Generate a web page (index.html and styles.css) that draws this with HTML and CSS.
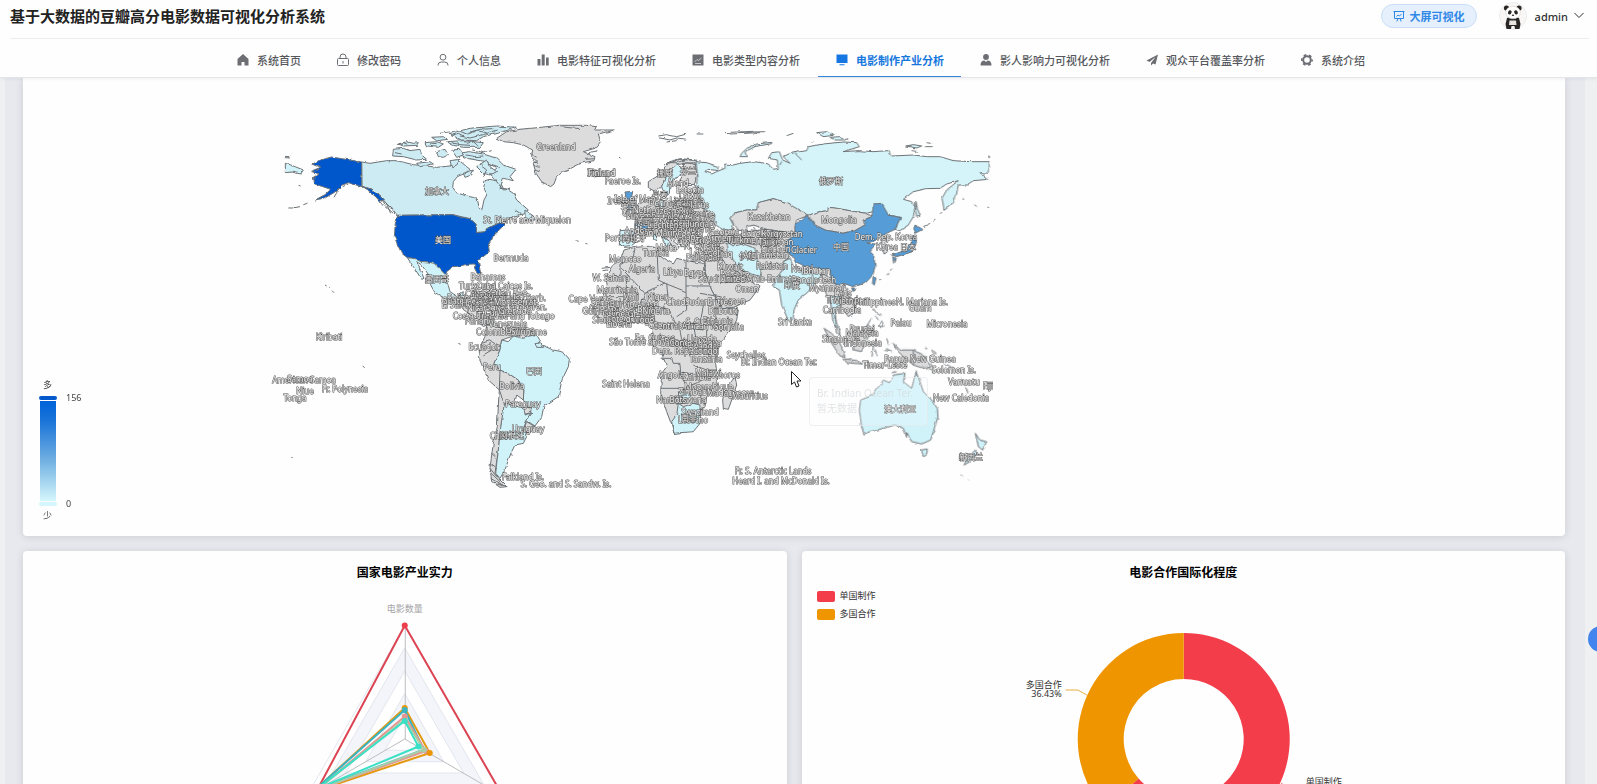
FILE: index.html
```html
<!DOCTYPE html>
<html lang="zh-CN">
<head>
<meta charset="utf-8">
<title>基于大数据的豆瓣高分电影数据可视化分析系统</title>
<link rel="stylesheet" href="styles.css">
</head>
<body>
<header class="header">
  <div class="topbar">
    <h1 class="brand">基于大数据的豆瓣高分电影数据可视化分析系统</h1>
    <div class="tools">
      <button class="screen-btn" type="button">
        <svg class="icon-sm" viewBox="0 0 12 12" fill="none" stroke="currentColor"><path d="M0.5 1.5h11M1.5 1.5v7h9v-7M3.8 11.5l1.2-3M8.2 11.5L7 8.500M3.500 6.500l1.500-1.500 1.500 1 2-2"/></svg>
        <span>大屏可视化</span>
      </button>
      <button class="user" type="button">
        <svg class="avatar" viewBox="0 0 28 28">
          <circle cx="14" cy="14" r="13.500" fill="#f8f7f5" stroke="#ececec"/>
          <g fill="#292524"><circle cx="7.500" cy="6" r="2.600"/><circle cx="20" cy="6" r="2.600"/><path d="M8 16q6-3 12 0l1.500 6-1 5h-4.500l-.5-3h-3l-.5 3H7.500L6.500 22z"/></g>
          <ellipse cx="14" cy="10.500" rx="7.300" ry="6.300" fill="#fff" stroke="#cfcac5" stroke-width=".5"/>
          <path d="M10.500 18.500h6.500l.5 4.500h-7.500z" fill="#e9e5e1"/>
          <g fill="#292524"><ellipse cx="10.800" cy="10.300" rx="1.700" ry="2.200" transform="rotate(30 10.800 10.300)"/><ellipse cx="17" cy="10.300" rx="1.700" ry="2.200" transform="rotate(-30 17 10.300)"/><ellipse cx="14" cy="13.200" rx="1.200" ry=".8"/></g>
        </svg>
        <span>admin</span>
        <svg class="icon-sm" viewBox="0 0 12 12" fill="none" stroke="currentColor"><path d="M1.500 3l4.500 4.500L10.500 3"/></svg>
      </button>
    </div>
  </div>
  <nav class="nav">
    <a class="nav-item" href="#"><svg class="icon" viewBox="0 0 16 16"><path fill="currentColor" d="M8 2L2.500 7v6.500H6.500V10h3v3.500h4V7z"/></svg>系统首页</a>
    <a class="nav-item" href="#"><svg class="icon" viewBox="0 0 16 16" fill="none" stroke="currentColor"><rect x="2.500" y="6.500" width="11" height="7" rx="1"/><path d="M5 6.500V5a3 3 0 0 1 6 0v1.500M8 9v2.500"/></svg>修改密码</a>
    <a class="nav-item" href="#"><svg class="icon" viewBox="0 0 16 16" fill="none" stroke="currentColor"><circle cx="8" cy="5.200" r="2.900"/><path d="M3 13.500V13a3.500 3 0 0 1 3.500-3h3A3.500 3 0 0 1 13 13v.5"/></svg>个人信息</a>
    <a class="nav-item" href="#"><svg class="icon" viewBox="0 0 16 16" fill="currentColor"><path d="M2.500 7h3v6.500h-3zM6.700 2.500h3v11h-3zM11 5.500h2.700v8H11z"/></svg>电影特征可视化分析</a>
    <a class="nav-item" href="#"><svg class="icon" viewBox="0 0 16 16"><path fill="currentColor" d="M2.500 2.500h11v11h-11z"/><path d="M4.500 10l2.500-2.500 1.500 1L11.500 6M5 11.500h6" fill="none" stroke="#ddd" stroke-width=".8"/></svg>电影类型内容分析</a>
    <a class="nav-item active" href="#" aria-current="page"><svg class="icon" viewBox="0 0 16 16"><path fill="currentColor" d="M2.500 2.500h11v8.500h-11zM5.500 12.300h5v1h-5z"/></svg>电影制作产业分析</a>
    <a class="nav-item" href="#"><svg class="icon" viewBox="0 0 16 16" fill="currentColor"><circle cx="8" cy="5" r="2.900"/><path d="M2.500 13.500q0-5 4-5L8 10l1.500-1.500q4 0 4 5z"/></svg>影人影响力可视化分析</a>
    <a class="nav-item" href="#"><svg class="icon" viewBox="0 0 16 16" fill="currentColor"><path d="M14 2.500L2.500 8.500l3 1.500 6-5-4.500 6v2.500l2-2 2.500 1z"/></svg>观众平台覆盖率分析</a>
    <a class="nav-item" href="#"><svg class="icon" viewBox="0 0 16 16" fill="none" stroke="currentColor"><circle cx="8" cy="8" r="3.800" stroke-width="2"/><circle cx="8" cy="8" r="5.200" stroke-width="1.600" stroke-dasharray="2.700 2.745" stroke-dashoffset="1.300"/></svg>系统介绍</a>
  </nav>
</header>

<main class="page">
  <div class="content">
  <section class="card map-card">
    <svg class="map" viewBox="23 78 1542 458" role="img" aria-label="世界电影产量地图">
      <defs>
        <linearGradient id="scale" x1="0" y1="0" x2="0" y2="1"><stop offset="0" stop-color="#0062d9"/><stop offset=".2" stop-color="#1b74d9"/><stop offset=".6" stop-color="#72b1e2"/><stop offset="1" stop-color="#d5f6fc"/></linearGradient>
        <filter id="coast" x="-5%" y="-5%" width="110%" height="110%"><feTurbulence type="fractalNoise" baseFrequency=".16" numOctaves="2" seed="4"/><feDisplacementMap in="SourceGraphic" scale="3" xChannelSelector="R" yChannelSelector="G"/></filter>
      </defs>

      <g class="land" filter="url(#coast)">
        <g transform="translate(270 110) scale(.33333)">
          <path class="ca" d="M275 156L300 160 350 152 380 152 430 164 470 168 500 172 540 168 555 150 572 155 590 170 600 178 585 190 562 200 550 215 548 232 560 248 590 258 618 264 624 290 636 298 642 270 650 255 640 238 645 212 660 208 690 215 700 235 715 240 730 250 740 270 758 285 775 300 760 312 730 318 705 338 690 338 668 348 640 366 620 368 618 342 600 326 548 314 383 316 360 292 340 270 325 252 300 236 276 230Z"/>
          <path class="ca" d="M565 130L600 125 640 132 680 145 700 165 738 178 720 200 730 212 700 205 690 235 720 238 700 240 680 215 660 190 680 175 650 155 620 150 590 145Z"/>
          <path class="ca" d="M370 118L400 115 420 122 450 118 455 135 470 148 440 150 400 140 368 138ZM385 102L410 95 430 100 445 98 440 106 400 108ZM465 98L500 95 520 102 505 112 470 108ZM500 125L525 118 535 135 520 142 505 140ZM545 120L570 118 580 135 560 142ZM485 82L520 80 530 88 500 92ZM540 70L560 65 600 55 680 48 740 52 700 65 640 80 620 92 570 90ZM530 95L580 92 640 98 630 112 580 112 550 106ZM620 170L650 150 660 170 680 185 660 195 640 190ZM765 300L790 318 795 330 765 332ZM440 160L480 155 490 162 450 170ZM540 152L570 148 560 165 545 170ZM580 190L610 180 605 195 585 202Z"/>
          <path class="none" d="M560 60L590 72 620 62 650 68M570 78L600 84 640 74 680 60M590 100L610 95 625 108M610 120L640 128 665 122M380 105L400 98 415 104M510 70L540 66M630 165L650 180 640 200M340 272L370 300 380 318M350 282L362 310M310 250L335 275M322 246L346 285M735 300L750 310 740 325M545 76L565 70 585 80M600 66L630 58 670 56M545 98L570 104 600 106M590 135L615 140 640 138M655 160L690 172M480 102L500 100M375 128L395 132M346 288L372 312M316 258L340 288"/>
          <path class="us" d="M275 156L240 150 185 141 150 150 128 162 152 172 122 184 148 192 130 202 134 222 158 230 182 238 165 254 135 270 165 264 195 246 215 226 235 218 276 230 300 236 325 252 340 270 330 272 300 245 275 230Z"/>
          <path class="us" d="M383 316L548 314 575 322 600 326 618 342 620 368 640 366 668 348 690 338 704 342 690 358 672 372 665 390 655 405 658 425 640 440 625 452 628 470 632 490 624 495 614 475 612 462 590 463 570 468 550 470 530 485 527 495 510 478 492 460 475 456 450 454 438 447 412 443 395 430 383 405 373 380 376 340Z"/>
          <path class="lo" d="M46 160L60 164 100 180 92 192 66 186 46 188ZM46 139L60 140 60 144 46 143Z"/>
          <path class="lo" d="M412 443L438 447 450 454 475 456 492 460 510 478 527 495 532 515 540 545 560 558 580 545 578 558 555 570 530 568 495 548 482 525 480 500 455 465 440 455 462 505 455 508 430 470Z"/>
          <path class="no" d="M540 568L600 580 640 620 660 640 640 650 610 620 575 595ZM610 545L650 548 690 562 680 568 640 558ZM700 565L740 568 735 580 705 578Z"/>
          <path class="none" d="M55 294L70 294M74 293L90 290M100 284L112 280M86 226L92 228M130 202L138 205M165 525L170 528M178 532L182 536M186 542L192 548M218 230L235 222M205 240L192 262"/>
        </g>

        <g transform="translate(270 300) scale(.33333)">
          <path class="no" d="M650 75L700 85 790 95 798 104 760 115 730 108 695 120 690 150 672 190 690 210 715 220 745 240 762 270 760 300 740 285 735 305 703 312 700 340 690 400 685 450 675 520 690 540 710 560 690 562 665 545 660 500 670 430 682 380 686 300 688 270 655 240 640 205 625 170 635 130 645 110Z"/>
          <path class="none" d="M635 130L660 122 690 140M640 165L665 150 690 150M690 210L688 270 703 312M655 45L650 75M720 85L722 105M662 490L675 500M658 515L690 545M662 535L700 558M670 550L712 560M745 80L750 110M664 460L676 470M660 505L680 530"/>
          <path class="lo" d="M695 120L715 125 730 108 760 115 790 105 798 100 808 118 815 135 850 150 880 156 898 178 895 200 876 240 865 290 822 318 815 350 795 378 770 362 785 340 760 300 762 270 745 240 715 220 690 210 672 190 690 150ZM795 130L812 130 818 142 800 142Z"/>
          <path class="lo" d="M703 312L730 315 770 330 765 345 785 340 770 362 760 385 770 410 760 430 735 435 725 455 715 480 705 510 690 535 677 520 685 450 692 380Z"/>
          <path class="no" d="M760 320L785 325 780 340 765 342ZM770 365L795 380 775 400 760 392Z"/>
          <path class="none" d="M565 130L572 133M278 198L284 203M64 471L68 473M720 462L728 466M705 530L730 525"/>
        </g>

        <g transform="translate(520 110) scale(.33333)">
          <path class="no" d="M-70 85L-40 65 0 58 60 52 120 46 200 46 228 50 225 60 283 60 235 72 242 95 225 115 190 125 225 140 222 152 180 160 150 175 122 187 110 200 102 222 92 230 65 215 48 190 40 160 52 155 35 140 38 120 10 105 -20 98 -50 95Z"/>
          <path class="none" d="M30 130L50 142M36 150L54 160M40 165L56 172M45 180L60 186M120 50L180 56M200 130L232 122M195 148L225 146M415 78L440 74 470 80 500 72M420 84L450 90 470 84 500 88M440 96L470 92M530 72L550 72M615 68L650 66 700 64M630 72L720 68M205 182L230 180 245 195 220 198M300 142L304 144M170 392L176 394M196 400L202 402M245 475L270 472M248 482L262 480"/>
          <path class="no" d="M330 290L370 275 400 260 440 275 560 270 560 310 585 320 580 345 550 352 520 360 500 410 485 410 470 380 450 385 480 410 470 420 430 380 400 360 380 375 345 360 345 330 315 310Z"/>
          <path class="no" d="M385 235L385 215 410 200 430 180 445 160 480 148 530 152 530 165 500 158 470 165 450 180 435 205 425 230 410 245ZM490 160L525 158 530 190 525 220 490 222 480 210 492 190Z"/>
          <path class="lo" d="M425 230L435 205 450 178 470 165 490 175 488 192 470 200 450 225 448 250 436 262Z"/>
          <path class="none" d="M432 165L450 155 480 146 530 150M440 158L470 158 500 148M485 225L560 230M490 245L555 250M470 290L560 295M430 300L580 320M440 315L560 340M380 330L470 350M400 345L500 360M520 270L525 350M480 270L485 350"/>
          <path class="mid" d="M315 246L338 244 335 262 345 280 357 290 335 300 320 298 330 280 318 262ZM345 340L365 338 390 352 380 365 345 360Z"/>
          <path class="lo" d="M300 362L325 360 350 372 345 385 350 395 330 410 312 412 298 405ZM405 275L435 275 435 290 405 290ZM465 282L490 282 490 298 465 298ZM425 380L448 395 455 405 440 410 430 395ZM402 375L410 378 408 392 400 388Z"/>
          <path class="no" d="M312 420L345 412 400 408 412 412 410 432 430 445 460 462 470 445 500 452 550 460 552 480 575 540 600 590 655 600 650 630 640 650 600 700 585 730 590 790 588 830 560 860 555 890 540 905 540 940 510 960 462 970 455 945 440 905 422 850 425 790 440 770 425 730 405 710 395 685 400 660 385 640 350 635 310 645 270 645 235 620 215 600 240 575 262 530 258 500 275 470 305 440Z"/>
          <path class="no" d="M520 385L600 375 640 385 650 430 640 480 690 510 720 530 690 570 640 592 605 592 575 540 555 485 556 430 525 410Z"/>
          <path class="none" d="M412 440L415 510 435 520 498 545 498 455M345 415L340 440 300 465 300 470 375 550 435 518M258 500L300 500 300 470M320 500L318 560 260 560M440 520L445 570 430 590M498 528L575 528M375 550L360 590 330 600M498 545L500 600 470 620M300 580L350 590 400 585 450 600M550 590L540 640 480 640M400 585L405 640M330 600L330 640M360 600L360 640M450 600L470 650 550 660M550 430L555 480M580 400L570 430M600 430L625 480M600 520L690 510M540 550L600 560M425 745L455 745 460 760 480 760 482 790 520 790M422 835L490 835 495 870M520 765L560 780 590 780M480 660L490 720 530 720M560 660L560 700 590 715M520 640L530 700M480 790L500 830 540 815 560 790M540 840L545 880"/>
          <path class="lo" d="M470 915L475 880 490 890 520 880 540 885 540 940 520 965 462 970 455 935ZM475 845L510 850 505 870 480 880Z"/>
          <path class="no" d="M645 800L650 825 635 870 625 898 610 895 608 870 615 835 630 820Z"/>
        </g>

        <g transform="translate(740 110) scale(.33333)">
          <path class="ru" d="M-132 155L-100 158 -65 170 -68 182 -95 178 -105 185 -85 192 -70 185 -45 175 -45 162 -20 165 0 160 40 155 65 158 85 162 100 178 115 175 112 150 85 145 95 128 118 125 128 150 150 160 130 140 150 130 200 122 205 110 250 102 310 96 350 98 358 110 310 125 355 122 400 125 445 122 455 138 520 135 560 140 600 140 640 152 690 155 748 155 748 190 720 188 745 208 700 212 680 225 655 225 648 260 630 285 612 298 606 265 620 240 655 212 620 222 600 235 560 236 520 245 490 268 515 275 525 290 520 320 505 345 480 362 465 358 482 322 445 315 425 285 400 282 398 305 380 310 345 305 290 295 265 292 262 302 235 306 205 316 185 305 155 290 140 278 100 266 55 278 50 300 20 300 -20 310 -30 325 -20 345 -25 360 -50 360 -80 340 -75 315 -110 295 -115 265 -130 240 -128 190Z"/>
          <path class="ru" d="M95 97L50 102 20 115 5 130 0 140 20 140 15 125 45 110 95 101ZM527 275L534 300 541 318 530 322 527 300ZM230 68L260 65 280 76 250 80ZM270 82L300 80 310 90 285 90ZM497 108L520 104 545 108 530 114Z"/>
          <path class="none" d="M0 70L40 66 75 65M140 77L160 70M215 97L220 94M310 90L325 86M560 98L572 100M555 110L578 110M515 122L530 124M748 140L742 144M550 350L570 340M580 335L586 330M600 312L606 306M667 266L672 269M704 285L710 289M742 291L747 293M420 510L424 507M440 495L446 490M450 482L456 476M120 165L125 155M165 130L185 150"/>
          <path class="no" d="M-20 310L20 300 50 300 55 278 100 266 140 278 185 305 205 316 170 330 165 350 165 372 130 365 80 358 40 345 20 350 20 365 -5 360 -20 340 -30 325ZM205 316L235 306 262 302 265 292 290 295 345 305 380 310 398 320 370 330 375 345 345 362 310 370 255 360 225 345Z"/>
          <path class="no" d="M-50 365L-5 375 20 365 80 358 165 372 140 395 135 420 155 435 130 455 132 475 105 510 60 510 60 480 45 440 0 420 -50 390Z"/>
          <path class="none" d="M0 378L60 390 120 380M20 400L80 410 130 400M60 400L70 440 130 440M60 480L110 460M40 350L60 380"/>
          <path class="lo" d="M-40 395L-20 408 10 402 45 415 50 440 60 480 60 500 30 490 0 480 -20 450 -35 425Z"/>
          <path class="cn" d="M205 318L225 345 255 360 310 370 345 362 375 345 370 330 395 320 398 305 400 282 425 280 445 315 482 322 470 345 465 358 440 370 420 380 405 392 380 400 408 402 388 425 402 440 405 470 398 495 375 520 340 530 310 520 285 525 272 505 270 480 240 475 200 470 165 455 155 435 135 420 140 395 165 372 165 345 200 318ZM400 502L408 504 403 526 397 520ZM334 534L344 534 340 542Z"/>
          <path class="cn" d="M525 345L548 358 525 370ZM520 375L530 395 518 425 470 440 455 435 500 420 512 395ZM458 440L466 445 461 460Z"/>
          <path class="no" d="M425 385L445 378 435 400 445 425 432 432 425 405Z"/>
          <path class="lo" d="M130 455L150 445 158 465 200 485 220 490 245 490 240 505 222 520 205 545 175 570 162 600 160 625 150 637 142 625 125 585 118 540 100 530 105 510 120 490 132 475Z"/>
          <path class="no" d="M272 505L285 525 310 520 320 535 325 560 345 580 345 605 325 620 310 600 300 590 285 610 290 640 280 620 275 590 262 560 250 530 245 490ZM165 625L174 635 170 645 162 638Z"/>
          <path class="lo" d="M270 560L300 555 310 580 290 590 284 620 292 645 300 660 290 655 278 630Z"/>
        </g>

        <g transform="translate(740 300) scale(.33333)">
          <path class="no" d="M252 85L275 100 300 130 315 170 300 168 275 130ZM285 75L298 88 300 108 290 100ZM312 176L350 182 368 192 320 188ZM340 130L360 100 385 75 398 88 380 120 365 155 342 150ZM460 130L480 150 520 150 555 170 575 200 550 205 520 195 490 170 470 150Z"/>
          <path class="none" d="M375 195L400 198 430 204M395 135L415 130M400 140L396 170M405 148L412 168M400 25L410 40 425 48M405 45L415 60M425 62L432 80 415 78 422 65M375 85L395 55M440 115L446 135M438 145L455 155 430 150M520 150L520 195M575 150L590 160M565 205L585 212M610 188L640 205M650 210L660 215M665 232L670 250M677 262L684 280M555 145L562 146M735 262L742 268M665 525L668 528M685 538L687 540M455 218L470 215M490 222L495 238M355 185L360 188"/>
          <path class="lo" d="M362 300L400 285 412 265 430 240 448 248 460 225 495 220 490 245 515 265 528 215 540 245 550 275 575 300 592 325 594 350 580 395 572 420 545 432 515 425 500 400 500 412 490 385 465 375 430 385 390 395 372 402 365 380 358 330ZM543 450L562 447 560 465 550 470ZM706 400L720 420 740 425 728 450 715 440ZM705 450L712 462 690 485 672 495 680 480Z"/>
        </g>
      </g>

      <g class="labels">
        <text x="556" y="150">Greenland</text><text x="601" y="176">Iceland</text><text x="602" y="176">Finland</text><text x="623" y="184">Faeroe Is.</text>
        <text x="437" y="194">加拿大</text><text x="443" y="243">美国</text><text x="437" y="282">墨西哥</text><text x="511" y="261">Bermuda</text><text x="527" y="223">St. Pierre and Miquelon</text>
        <text x="488" y="280">Bahamas</text><text x="496" y="289">Turks and Caicos Is.</text><text x="486" y="289">Cuba</text><text x="500" y="296">Dominican Rep.</text><text x="486" y="297">Cayman Is.</text><text x="512" y="301">Antigua and Barb.</text><text x="497" y="301">U.S. Virgin Is.</text><text x="478" y="302">Jamaica</text><text x="458" y="301">Belize</text><text x="462" y="308">El Salvador</text><text x="462" y="304">Guatemala</text><text x="480" y="306">Honduras</text><text x="505" y="307">St. Kitts and Nevis</text><text x="515" y="310">St. Vin. and Gren.</text><text x="486" y="311">Nicaragua</text><text x="515" y="305">Montserrat</text><text x="472" y="319">Costa Rica</text><text x="516" y="319">Trinidad and Tobago</text><text x="500" y="316">Curaçao</text><text x="515" y="314">Grenada</text><text x="480" y="324">Panama</text><text x="508" y="327">Venezuela</text><text x="494" y="335">Colombia</text><text x="520" y="333">Guyana</text><text x="529" y="335">Suriname</text>
        <text x="484" y="350">Ecuador</text><text x="492" y="370">Peru</text><text x="534" y="374">巴西</text><text x="512" y="389">Bolivia</text><text x="523" y="407">Paraguay</text><text x="528" y="432">Uruguay</text><text x="499" y="439">Chile</text><text x="512" y="438">阿根廷</text><text x="523" y="480">Falkland Is.</text><text x="566" y="487">S. Geo. and S. Sandw. Is.</text>
        <text x="329" y="340">Kiribati</text><text x="304" y="383">American Samoa</text><text x="300" y="382">Samoa</text><text x="305" y="394">Niue</text><text x="295" y="401">Tonga</text><text x="345" y="392">Fr. Polynesia</text>

        <text x="665" y="176">挪威</text><text x="688" y="174">芬兰</text><text x="678" y="186">Åland</text><text x="690" y="193">Estonia</text><text x="690" y="199">Latvia</text><text x="687" y="204">Lithuania</text><text x="660" y="198">丹麦</text><text x="621" y="204">Ireland</text><text x="635" y="202">Isle of Man</text><text x="629" y="208">英国</text><text x="666" y="206">Denmark</text><text x="695" y="208">Belarus</text><text x="682" y="208">波兰</text><text x="640" y="216">Guernsey</text><text x="656" y="213">Netherlands</text><text x="650" y="219">Luxembourg</text><text x="675" y="214">Czech Rep.</text><text x="700" y="217">Ukraine</text><text x="682" y="219">Slovakia</text><text x="662" y="223">Switzerland</text><text x="697" y="222">Moldova</text><text x="643" y="225">法国</text><text x="676" y="225">Austria</text><text x="690" y="227">Romania</text><text x="665" y="230">Slovenia</text><text x="678" y="232">Croatia</text><text x="696" y="232">Bulgaria</text><text x="650" y="233">Monaco</text><text x="682" y="237">Macedonia</text><text x="640" y="234">Andorra</text><text x="661" y="236">San Marino</text><text x="672" y="228">Liechtenstein</text><text x="700" y="227">Hungary</text><text x="688" y="240">Albania</text><text x="621" y="241">Portugal</text><text x="634" y="241">西班牙</text><text x="666" y="251">Malta</text><text x="690" y="244">Greece</text><text x="656" y="256">Tunisia</text>
        <text x="708" y="244">Turkey</text><text x="724" y="235">Georgia</text><text x="735" y="243">Azerbaijan</text><text x="722" y="241">Armenia</text><text x="702" y="249">N. Cyprus</text><text x="715" y="252">Syria</text><text x="706" y="256">Lebanon</text><text x="703" y="261">Palestine</text><text x="710" y="260">Jordan</text><text x="725" y="257">Iraq</text><text x="747" y="259">伊朗</text><text x="730" y="270">Kuwait</text><text x="735" y="277">Bahrain</text><text x="722" y="282">Saudi Arabia</text><text x="743" y="281">Qatar</text><text x="760" y="282">United Arab Emirates</text><text x="747" y="292">Oman</text><text x="733" y="304">Yemen</text>
        <text x="625" y="262">Morocco</text><text x="642" y="272">Algeria</text><text x="673" y="275">Libya</text><text x="695" y="276">Egypt</text><text x="611" y="281">W. Sahara</text><text x="617" y="293">Mauritania</text><text x="631" y="300">Mali</text><text x="657" y="300">Niger</text><text x="590" y="302">Cape Verde</text><text x="676" y="305">Chad</text><text x="697" y="305">Sudan</text><text x="720" y="305">Eritrea</text><text x="606" y="306">Senegal</text><text x="604" y="311">Gambia</text><text x="609" y="314">Guinea-Bissau</text><text x="616" y="317">Guinea</text><text x="634" y="307">Burkina Faso</text><text x="616" y="323">Sierra Leone</text><text x="619" y="327">Liberia</text><text x="630" y="322">Côte d'Ivoire</text><text x="640" y="317">Ghana</text><text x="645" y="323">Togo</text><text x="648" y="312">Benin</text><text x="656" y="314">Nigeria</text><text x="668" y="328">Cameroon</text><text x="690" y="329">Central African Rep.</text><text x="702" y="325">S. Sudan</text><text x="718" y="324">Ethiopia</text><text x="723" y="314">Djibouti</text><text x="729" y="330">Somalia</text><text x="655" y="341">Eq. Guinea</text><text x="652" y="345">São Tomé and Principe</text><text x="672" y="346">Gabon</text><text x="682" y="346">Congo</text><text x="702" y="342">Uganda</text><text x="710" y="346">Kenya</text><text x="702" y="349">Rwanda</text><text x="704" y="354">Burundi</text><text x="685" y="354">Dem. Rep. Congo</text><text x="706" y="362">Tanzania</text><text x="746" y="358">Seychelles</text><text x="779" y="365">Br. Indian Ocean Ter.</text><text x="671" y="378">Angola</text><text x="697" y="380">Zambia</text><text x="723" y="378">Comoros</text><text x="708" y="376">Malawi</text><text x="626" y="387">Saint Helena</text><text x="709" y="390">Mozambique</text><text x="698" y="395">Zimbabwe</text><text x="730" y="396">Madagascar</text><text x="750" y="399">Mauritius</text><text x="672" y="403">Namibia</text><text x="688" y="403">Botswana</text><text x="700" y="415">Swaziland</text><text x="693" y="423">Lesotho</text><text x="689" y="421">南非</text>

        <text x="831" y="184">俄罗斯</text><text x="769" y="220">Kazakhstan</text><text x="839" y="223">Mongolia</text><text x="841" y="250">中国</text><text x="804" y="253">Glacier</text><text x="886" y="240">Dem. Rep. Korea</text><text x="896" y="250">Korea 日本</text><text x="762" y="237">Uzbekistan</text><text x="782" y="237">Kyrgyzstan</text><text x="753" y="243">Turkmenistan</text><text x="776" y="245">Tajikistan</text><text x="776" y="252">Siachen</text><text x="766" y="258">Afghanistan</text><text x="772" y="269">Pakistan</text><text x="802" y="272">Nepal</text><text x="817" y="274">Bhutan</text><text x="814" y="283">Bangladesh</text><text x="792" y="288">印度</text><text x="827" y="291">Myanmar</text><text x="843" y="296">Laos</text><text x="842" y="303">Thailand</text><text x="850" y="304">Vietnam</text><text x="875" y="305">Philippines</text><text x="922" y="305">N. Mariana Is.</text><text x="920" y="311">Guam</text><text x="842" y="313">Cambodia</text><text x="901" y="326">Palau</text><text x="947" y="327">Micronesia</text><text x="795" y="325">Sri Lanka</text><text x="862" y="332">Brunei</text><text x="862" y="336">Malaysia</text><text x="841" y="342">Singapore</text><text x="863" y="346">Indonesia</text><text x="885" y="368">Timor-Leste</text><text x="920" y="362">Papua New Guinea</text><text x="954" y="373">Solomon Is.</text><text x="964" y="385">Vanuatu</text><text x="988" y="389">Fiji</text><text x="961" y="401">New Caledonia</text><text x="900" y="412">澳大利亚</text><text x="971" y="460">新西兰</text><text x="773" y="474">Fr. S. Antarctic Lands</text><text x="781" y="484">Heard I. and McDonald Is.</text>
      </g>

      <g class="tip">
        <rect x="809.500" y="377.500" width="118" height="48" rx="3"/>
        <text x="817" y="397">Br. Indian Ocean Ter.</text>
        <text x="817" y="412">暂无数据</text>
      </g>
      <path class="cursor" d="M791.500 371.500v13l3-2.500 2 5 2.500-1-2-5h4z"/>

      <g class="scale">
        <text x="43" y="388">多</text>
        <rect x="39" y="396" width="18" height="4" rx="2" fill="#0459cc"/>
        <rect x="40" y="401" width="16" height="100" fill="url(#scale)"/>
        <rect x="39" y="502" width="18" height="4" rx="2" fill="#d5f6fc"/>
        <text x="66" y="401">156</text><text x="66" y="507">0</text>
        <text x="43" y="519">少</text>
      </g>
    </svg>
  </section>

  <div class="row">
    <section class="card chart-card">
      <h2 class="card-title">国家电影产业实力</h2>
      <svg class="chart" viewBox="-300 -153 600 330" role="img" aria-label="国家电影产业实力">
        <g class="radar-grid">
          <path d="M0-113.500L98 57H-98Z" fill="#fff"/>
          <path d="M0-91L79 45.500H-79Z" fill="#f3f5fa"/>
          <path d="M0-68L59 34H-59Z" fill="#fff"/>
          <path d="M0-45.500L39 22.700H-39Z" fill="#f3f5fa"/>
          <path d="M0-22.700L20 11.300H-20Z" fill="#fff"/>
        </g>
        <path d="M.5 0V-113M0 0L98 57M0 0L-98 57" stroke="#bdbdc0" fill="none"/>
        <text class="axis-name" x="0" y="-127">电影数量</text>
        <g class="series">
          <path class="s1" d="M0-113.500L98 57-87 50Z"/>
          <path class="s2" d="M0-31L25 14-92 53Z"/>
          <path class="s3" d="M0-29L19 10.700-90 51Z"/>
          <path class="s4" d="M0-22.500L21 12-88 51Z"/>
          <path class="s5" d="M0-19.500L19 10.700-88 51Z"/>
          <path class="s6" d="M0-18L13.700 7.500-88 50Z"/>
        </g>
        <circle r="3" cy="-113.500" fill="#ee3d4b"/><circle r="3" cy="-31" fill="#ec9503"/><circle r="3" cy="-29" fill="#3ab3c2"/><circle r="3" cy="-22.500" fill="#e49690"/><circle r="3" cy="-18" fill="#3be0c6"/>
        <circle r="3" cx="21" cy="12" fill="#e49690"/><circle r="3" cx="19" cy="10.700" fill="#a9cda7"/><circle r="3" cx="25" cy="14" fill="#ec9503"/><circle r="3" cx="13.700" cy="7.500" fill="#3be0c6"/>
      </svg>
    </section>
    <section class="card chart-card">
      <h2 class="card-title">电影合作国际化程度</h2>
      <ul class="legend">
        <li><span class="swatch red"></span>单国制作</li>
        <li><span class="swatch orange"></span>多国合作</li>
      </ul>
      <svg class="chart" viewBox="-300 -153 600 330" role="img" aria-label="电影合作国际化程度">
        <path fill="#f33d4a" d="M0-106A106 106 0 1 1-79.800 69.800L-45.200 39.500A60 60 0 1 0 0-60Z"/>
        <path fill="#ef9500" d="M-79.800 69.800A106 106 0 0 1 0-106V-60A60 60 0 0 0-45.200 39.500Z"/>
        <path d="M-118-49h12l9 5" stroke="#e6ad45" fill="none"/>
        <path d="M97 44l9 5h12" stroke="#f08088" fill="none"/>
        <g class="pie-label"><text x="-122" y="-51" text-anchor="end">多国合作</text><text x="-122" y="-42" text-anchor="end">36.43%</text><text x="122" y="46">单国制作</text><text x="122" y="55">63.57%</text></g>
      </svg>
    </section>
  </div>
  </div>
</main>
<button class="float-btn" type="button" aria-label="助手"></button>
</body>
</html>
```
FILE: styles.css
```css
* { box-sizing: border-box; }
body {
  margin: 0;
  height: 100vh;
  display: flex;
  flex-direction: column;
  overflow: hidden;
  background: #eff0f2;
  color: #303133;
  font-family: "Noto Sans", "Noto Sans CJK SC", sans-serif;
  font-size: 11px;
}
button { font: inherit; border: 0; background: none; padding: 0; }
.header {
  position: relative;
  z-index: 2;
  flex: none;
  background: #fefefe;
  border-bottom: 1px solid #e4e5e8;
  box-shadow: 0 1px 4px rgba(0, 0, 0, .06);
}
.topbar {
  display: flex;
  align-items: center;
  justify-content: space-between;
  height: 39px;
  margin: 0 8px 0 10px;
  padding-bottom: 6px;
  border-bottom: 1px solid #ededf0;
}
.brand { margin: 0; font-size: 15px; line-height: 20px; font-weight: 700; color: #222; }
.tools { display: flex; align-items: center; gap: 22px; padding-right: 4px; }
.screen-btn {
  display: flex;
  align-items: center;
  gap: 5px;
  height: 24px;
  padding: 0 11px;
  border: 1px solid #c8dff8;
  border-radius: 12px;
  background: #e5f0fc;
  color: #2f88e6;
  font-weight: 700;
}
.icon-sm { width: 12px; height: 12px; }
.user { display: flex; align-items: center; gap: 5px; color: #303133; font-weight: 500; }
.avatar { width: 28px; height: 28px; margin-right: 3px; }
.nav { display: flex; justify-content: center; gap: 1px; height: 38px; padding-left: 4px; }
.nav-item {
  display: flex;
  align-items: center;
  gap: 6px;
  padding: 4px 17px 0 16px;
  border-bottom: 1px solid transparent;
  color: #55575c;
  font-weight: 500;
  text-decoration: none;
  white-space: nowrap;
}
.nav-item.active { color: #1677dd; border-color: #3688dc; font-weight: 700; }
.icon { width: 16px; height: 16px; color: #6c6e73; }
.active .icon { color: #1677e2; }

.page { flex: 1; min-height: 0; overflow: hidden; padding: 0 12px 0 5px; }
.content { padding: 0 20px 15px 18px; background: #e8e9ee; }
.card { background: #fefefe; border-radius: 4px; box-shadow: 0 1px 8px rgba(0, 0, 0, .12); }
.map-card { border-radius: 0 0 4px 4px; }
.map { display: block; width: 100%; height: auto; }
.row { display: grid; grid-template-columns: 1fr 1fr; gap: 15px; margin-top: 15px; }
.chart-card { position: relative; padding: 13px 15px 15px; }
.card-title { margin: 0; font-size: 12px; line-height: 18px; font-weight: 700; text-align: center; color: #000; }
.chart { display: block; width: 100%; height: 330px; margin-top: 4px; }

.land path { stroke: #6c7276; stroke-width: 3; stroke-linejoin: round; }
.land .none { fill: none; }
.land .no { fill: #dcdcdc; }
.land .ca { fill: #cdebf3; }
.land .lo { fill: #d0f2f9; }
.land .ru { fill: #d5f4f9; }
.land .us { fill: #0256cb; }
.land .cn, .land .mid { fill: #579dd7; }
.labels { font-size: 8px; text-anchor: middle; fill: #f2f2f2; stroke: #4d4d4d; stroke-width: 1px; paint-order: stroke; }
.tip rect { fill: #fff; fill-opacity: .2; stroke: #e6e8ea; stroke-opacity: .7; }
.tip text { font-size: 10px; fill: #d5d9db; fill-opacity: .7; }
.cursor { fill: #fff; stroke: #222; }
.scale text { font-size: 9px; fill: #444; }

.radar-grid path { stroke: #e3e6ee; }
.axis-name { font-size: 9px; fill: #a5a5a8; text-anchor: middle; }
.series path { fill: none; stroke-width: 2; stroke-linejoin: round; }
.s1 { stroke: #dc4453; }
.s2 { stroke: #e5990f; }
.s3 { stroke: #3ab3c2; }
.s4 { stroke: #e49690; }
.s5 { stroke: #a9cda7; }
.s6 { stroke: #3be0c6; }
.pie-label { font-size: 9px; fill: #333; }
.legend {
  position: absolute;
  top: 39px;
  left: 15px;
  display: grid;
  gap: 6px;
  margin: 0;
  padding: 0;
  list-style: none;
  font-size: 9px;
  line-height: 12px;
  color: #333;
}
.legend li { display: flex; align-items: center; gap: 5px; }
.swatch { width: 18px; height: 11px; border-radius: 2px; }
.red { background: #f33d4a; }
.orange { background: #ef9500; }
.float-btn {
  position: fixed;
  right: -17px;
  top: 626px;
  z-index: 3;
  width: 26px;
  height: 26px;
  border-radius: 50%;
  background: #4385ee;
}
```
